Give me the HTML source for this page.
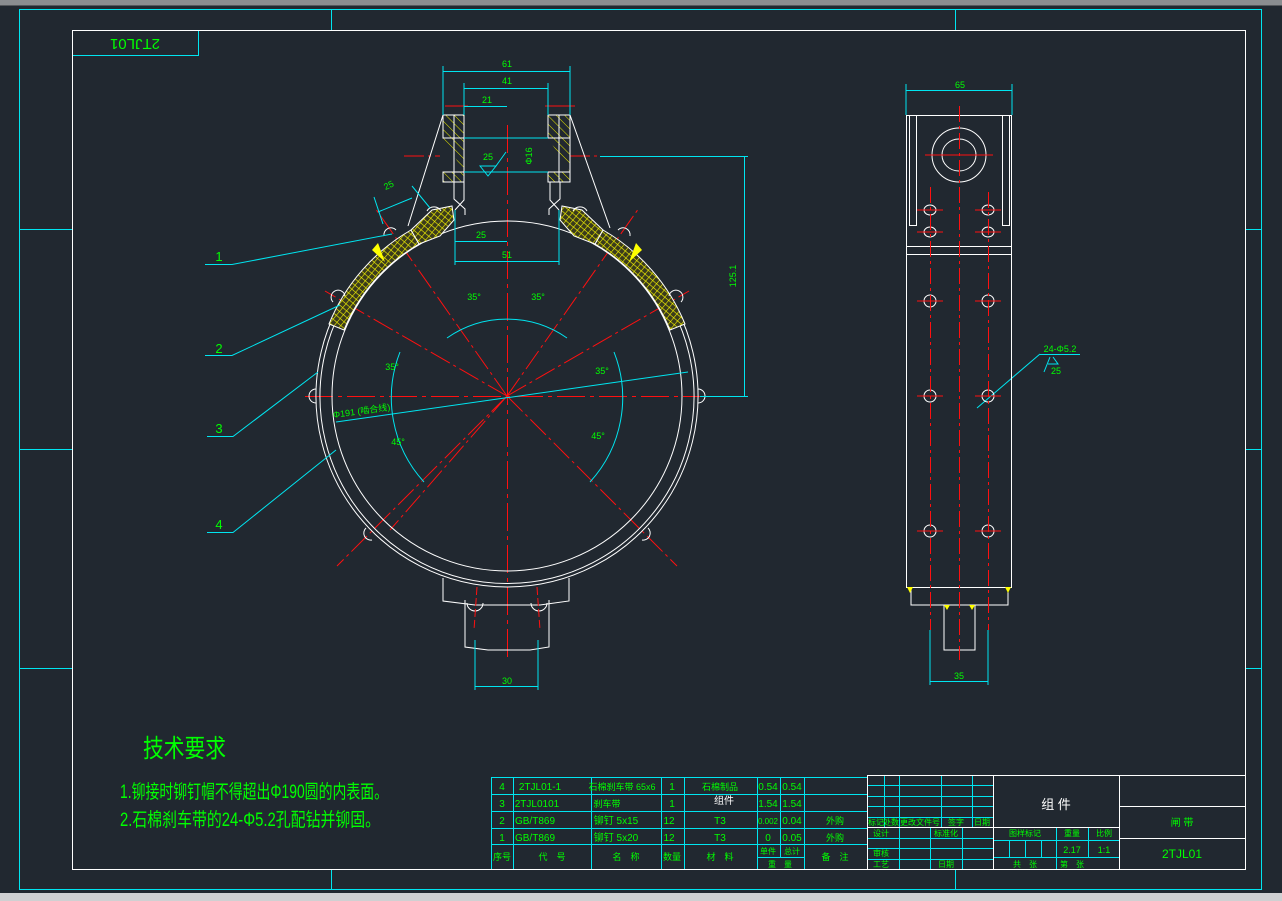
<!DOCTYPE html>
<html><head><meta charset="utf-8"><style>
html,body{margin:0;padding:0;background:#212830;}
svg{display:block}
text{font-family:"Liberation Sans","Noto Sans CJK SC",sans-serif;fill:#00ff00;}
</style></head><body>
<svg width="1282" height="901" viewBox="0 0 1282 901" xmlns="http://www.w3.org/2000/svg">
<defs>
<pattern id="hx" width="5" height="5" patternUnits="userSpaceOnUse" patternTransform="rotate(40)">
<rect width="5" height="5" fill="#3a3a1c"/>
<path d="M0 0H5M0 0V5" stroke="#f4f400" stroke-width="1.2"/>
</pattern>
<pattern id="hl" width="6" height="6" patternUnits="userSpaceOnUse" patternTransform="rotate(45)">
<rect width="6" height="6" fill="#212830"/>
<path d="M0 0H6" stroke="#e8e800" stroke-width="1"/>
</pattern>
</defs>
<rect width="1282" height="901" fill="#212830"/>
<rect x="0" y="0" width="1282" height="5" fill="#8a8d90"/>
<rect x="0" y="5" width="1282" height="1" fill="#55585c"/>
<rect x="0" y="893" width="1282" height="8" fill="#cfd0d2"/>

<!-- frame -->
<g fill="none" stroke="#00e5f0" stroke-width="1">
<rect x="19.5" y="9.5" width="1242" height="880"/>
<path d="M331.5 10V30M955.5 10V30M331.5 869V889M955.5 869V889M20 229.5H72M20 449.5H72M20 668.5H72M1246 229.5H1262M1246 449.5H1262M1246 668.5H1262"/>
<path d="M72 55.5H198.5V30"/>
</g>
<rect x="72.5" y="30.5" width="1173" height="839" fill="none" stroke="#fff"/>
<text x="135" y="43" font-size="15" transform="rotate(180 135 43)" text-anchor="middle" dominant-baseline="middle">2TJL01</text>

<!-- red centerlines -->
<g stroke="#ff1010" stroke-width="1" fill="none">
<path d="M305 396.5H748" stroke-dasharray="28 5 4 5"/>
<path d="M507.5 125V660" stroke-dasharray="28 5 4 5"/>
<path d="M507 396L639 208M507 396L375 208M507 396L689 291M507 396L325 291M507 396L677 566M507 396L337 566M507 396L390 530" stroke-dasharray="22 4 3 4"/>
<path d="M445 106H468M545 106H575" />
<path d="M404 156H440M570 156H600" stroke-dasharray="20 4 3 4"/>
</g>

<!-- ring -->
<g fill="none" stroke="#fff" stroke-width="1">
<circle cx="507" cy="396" r="175"/>
<path d="M588 223A191 191 0 1 1 426 223"/>
<path d="M586 227A187 187 0 1 1 428 227"/>
</g>
<path d="M411 230A192 192 0 0 0 329 324L344 330A176 176 0 0 1 419 244Z" fill="url(#hx)" stroke="#fff"/>
<path d="M603 230A192 192 0 0 1 685 324L670 330A176 176 0 0 0 595 244Z" fill="url(#hx)" stroke="#fff"/>
<path d="M419 244L440 236L454 220L452 206L432 210L411 230Z" fill="url(#hx)" stroke="#fff"/>
<path d="M595 244L574 236L560 220L562 206L582 210L603 230Z" fill="url(#hx)" stroke="#fff"/>
<path d="M372 250L378 243L385 262Z M642 250L636 243L629 262Z" fill="#ffff00"/>
<!-- rivet bumps -->
<g fill="none" stroke="#fff">
<path d="M333 302a7 7 0 1 1 12 -6"/><path d="M681 302a7 7 0 1 0 -12 -6"/>
<path d="M316 389a7 7 0 0 0 0 14"/><path d="M698 389a7 7 0 0 1 0 14"/>
<path d="M366 528a7 7 0 0 0 6 12"/><path d="M648 528a7 7 0 0 1 -6 12"/>
<path d="M427 211a8 8 0 0 1 14 0"/><path d="M573 211a8 8 0 0 1 14 0"/>
<path d="M384 236a7 7 0 0 1 12 -6"/><path d="M630 236a7 7 0 0 0 -12 -6"/>
<path d="M443 115L408 226M570 115L610 228"/>
</g>
<!-- clevis -->
<g stroke="#fff" fill="none">
<path d="M443 115H464V138H443Z M443 172H464V182H443Z M443 138H464V172" fill="url(#hl)"/>
<path d="M548 115H570V138H548Z M548 172H570V182H548Z M548 138H570V172" fill="url(#hl)"/>
<path d="M454 182V199L465 209V215M464 182V200L455 210" />
<path d="M560 182V199L549 209V215M550 182V200L559 210"/>
<path d="M454 115V182M559 115V182"/>
<path d="M464 138H548M464 172H548" stroke="#00e5f0"/>
<path d="M443 578V601L475 605H540L569 601V578"/>
<path d="M465 600V647L488 650H530L549 647V600"/>
<path d="M467 603a8 8 0 0 0 16 0M531 603a8 8 0 0 0 16 0"/>
</g>
<path d="M477 587L474 630M537 587L540 630" stroke="#ff1010" stroke-dasharray="8 3"/>

<!-- dimensions -->
<g stroke="#00e5f0" fill="none">
<path d="M443 66V115M570 66V115M443 71.5H570"/>
<path d="M464 83V115M548 83V115M464 88.5H548"/>
<path d="M464 101V115M464 106.5H507"/>
<path d="M455 210V265M559 210V265M455 241.5H507M455 261.5H559"/>
<path d="M600 156.5H748M700 396.5H748M744.5 156V396"/>
<path d="M475 640V690M538 640V690M475 686.5H538"/>
<path d="M374 197L383 224M412 186L430 208M378 212L412 198"/>
<path d="M205 264.5H232L392 234M205 355.5H232L340 305M207 436.5H233L318 372M207 532.5H233L336 450"/>
<path d="M336 422L688 372"/>
<path d="M447 338A105 105 0 0 1 567 338"/>
<path d="M400 352A125 125 0 0 0 424 482M614 352A125 125 0 0 1 590 482"/>
<path d="M480 166L488 176L496 166Z M496 166L506 152"/>
<path d="M906 84V115M1012 84V115M906 90.5H1012"/>
<path d="M930 630V685M988 630V685M930 681.5H988"/>
<path d="M1040 354.5H1080M977 408L1040 354M1050 357L1044 372M1053 357L1058 364H1048"/>
</g>
<g font-size="9" text-anchor="middle">
<text x="507" y="67">61</text><text x="507" y="84">41</text><text x="487" y="103">21</text>
<text x="481" y="238">25</text><text x="507" y="258">51</text><text x="507" y="684">30</text>
<text x="488" y="160">25</text>
<text x="532" y="156" transform="rotate(-90 532 156)">Φ16</text>
<text x="736" y="276" transform="rotate(-90 736 276)">125.1</text>
<text x="390" y="188" transform="rotate(-25 390 188)">25</text>
<text x="474" y="300">35°</text><text x="538" y="300">35°</text>
<text x="392" y="370">35°</text><text x="398" y="445">45°</text>
<text x="602" y="374">35°</text><text x="598" y="439">45°</text>
<text x="362" y="414" transform="rotate(-8 362 414)">Φ191 (啮合线)</text>
<text x="960" y="88">65</text><text x="959" y="679">35</text>
<text x="1060" y="352">24-Φ5.2</text><text x="1056" y="374">25</text>
</g>
<g font-size="13" text-anchor="middle">
<text x="219" y="261">1</text><text x="219" y="353">2</text><text x="219" y="433">3</text><text x="219" y="529">4</text>
</g>

<!-- right view -->
<g stroke="#fff" fill="none">
<rect x="906.5" y="115.5" width="105" height="472"/>
<path d="M906 246.5H1012M906 254.5H1012"/>
<rect x="909.5" y="115.5" width="7" height="110"/><rect x="1002.5" y="115.5" width="7" height="110"/>
<circle cx="959" cy="155" r="27"/><ellipse cx="959" cy="155" rx="17" ry="16"/>
<path d="M911 587V605H1008V587M944 605V650H975V605"/>
<ellipse cx="930" cy="210" rx="6" ry="5"/><ellipse cx="988" cy="210" rx="6" ry="5"/>
<ellipse cx="930" cy="232" rx="6" ry="5"/><ellipse cx="988" cy="232" rx="6" ry="5"/>
<circle cx="930" cy="301" r="6"/><circle cx="988" cy="301" r="6"/>
<circle cx="930" cy="396" r="6"/><circle cx="988" cy="396" r="6"/>
<circle cx="930" cy="531" r="6"/><circle cx="988" cy="531" r="6"/>
</g>
<g stroke="#ff1010" fill="none">
<path d="M930.5 187V630M988.5 192V630M959.5 106V660" stroke-dasharray="16 4 3 4"/>
<path d="M925 155H993M917 210H943M917 232H943M975 210H1001M975 232H1001M917 301H943M975 301H1001M917 396H943M975 396H1001M917 531H943M975 531H1001"/>
</g>
<path d="M907 587L913 587L910 593ZM1011 587L1005 587L1008 593ZM944 605L950 605L947 610ZM975 605L969 605L972 610Z" fill="#ffff00"/>

<!-- tech requirements -->
<text x="143" y="757" font-size="25" textLength="83" lengthAdjust="spacingAndGlyphs">技术要求</text>
<text x="120" y="798" font-size="19" textLength="268" lengthAdjust="spacingAndGlyphs">1.铆接时铆钉帽不得超出Φ190圆的内表面。</text>
<text x="120" y="826" font-size="19" textLength="260" lengthAdjust="spacingAndGlyphs">2.石棉刹车带的24-Φ5.2孔配钻并铆固。</text>

<!-- parts list -->
<g stroke="#00e5f0" fill="none">
<path d="M491 777.5H867M491 794.5H867M491 811.5H867M491 828.5H867M491 844.5H867M757 857.5H804"/>
<path d="M491.5 777V869M513.5 777V869M591.5 777V869M661.5 777V869M684.5 777V869M757.5 777V869M780.5 777V857M804.5 777V869"/>
</g>
<path d="M72 869.5H1246" stroke="#fff"/>
<g font-size="10" text-anchor="middle">
<text x="502" y="790">4</text><text x="502" y="807">3</text><text x="502" y="824">2</text><text x="502" y="841">1</text>
<text x="540" y="790">2TJL01-1</text><text x="537" y="807">2TJL0101</text><text x="535" y="824">GB/T869</text><text x="535" y="841">GB/T869</text>
<text x="622" y="790" font-size="9">石棉刹车带 65x6</text><text x="607" y="807" font-size="9">刹车带</text>
<text x="616" y="824">铆钉 5x15</text><text x="616" y="841">铆钉 5x20</text>
<text x="672" y="790">1</text><text x="672" y="807">1</text><text x="669" y="824">12</text><text x="669" y="841">12</text>
<text x="720" y="790" font-size="9">石棉制品</text><text x="724" y="804" style="fill:#fff">组件</text>
<text x="720" y="824">T3</text><text x="720" y="841">T3</text>
<text x="768" y="790">0.54</text><text x="768" y="807">1.54</text><text x="768" y="824" font-size="8">0.002</text><text x="768" y="841">0</text>
<text x="792" y="790">0.54</text><text x="792" y="807">1.54</text><text x="792" y="824">0.04</text><text x="792" y="841">0.05</text>
<text x="835" y="824" font-size="9">外购</text><text x="835" y="841" font-size="9">外购</text>
<text x="502" y="860" font-size="9">序号</text><text x="552" y="860" font-size="9">代　号</text>
<text x="626" y="860" font-size="9">名　称</text><text x="672" y="860" font-size="9">数量</text>
<text x="720" y="860" font-size="9">材　料</text><text x="768" y="854" font-size="8">单件</text>
<text x="792" y="854" font-size="8">总计</text><text x="780" y="867" font-size="8">重　量</text>
<text x="835" y="860" font-size="9">备　注</text>
</g>

<!-- title block -->
<g stroke="#00e5f0" fill="none">
<path d="M867 785.5H993M867 796.5H993M867 806.5H993M867 817.5H993M867 838.5H993M867 848.5H993M867 859.5H993"/>
<path d="M884.5 775V827M899.5 775V869M941.5 775V827M972.5 775V827M930.5 827V869M962.5 827V869"/>
<path d="M993 840.5H1119M993 857.5H1119M1009.5 840V857M1025.5 840V857M1041.5 840V857M1056.5 827V869M1088.5 827V857"/>
</g>
<g stroke="#fff" fill="none">
<path d="M867.5 775.5H1245.5V869M867.5 775V869M993.5 775V869M1119.5 775V869M867 827.5H1119M1119 806.5H1245M1119 838.5H1245"/>
</g>
<g font-size="8" text-anchor="middle">
<text x="876" y="825">标记</text><text x="891" y="825">处数</text><text x="920" y="825">更改文件号</text><text x="956" y="825">签字</text><text x="982" y="825">日期</text>
<text x="881" y="836">设计</text><text x="946" y="836">标准化</text><text x="1025" y="836">图样标记</text><text x="1072" y="836">重量</text><text x="1104" y="836">比例</text>
<text x="881" y="856">审核</text><text x="881" y="867">工艺</text><text x="946" y="867">日期</text>
<text x="1025" y="867">共　张</text><text x="1072" y="867">第　张</text>
<text x="1072" y="853" font-size="9">2.17</text><text x="1104" y="853" font-size="9">1:1</text>
</g>
<text x="1056" y="809" font-size="13" text-anchor="middle" style="fill:#fff">组 件</text>
<text x="1182" y="826" font-size="10" text-anchor="middle">闸 带</text>
<text x="1182" y="858" font-size="12" text-anchor="middle">2TJL01</text>
</svg>
</body></html>
